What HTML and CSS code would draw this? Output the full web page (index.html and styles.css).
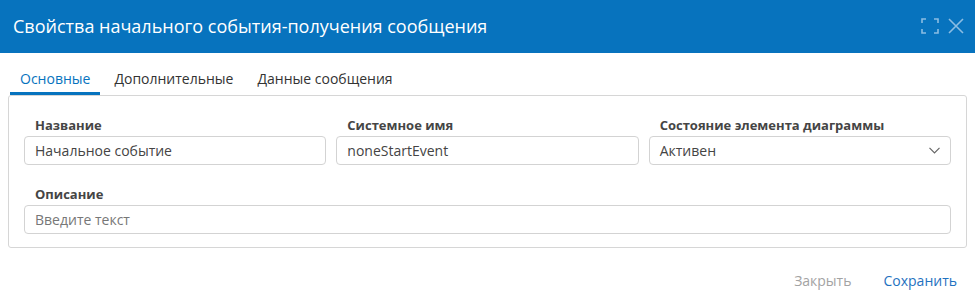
FILE: index.html
```html
<!DOCTYPE html>
<html lang="ru">
<head>
<meta charset="utf-8">
<title>Свойства начального события-получения сообщения</title>
<link rel="stylesheet" href="styles.css">
</head>
<body>
<div class="dialog">
  <div class="header">
    <div class="title">Свойства начального события-получения сообщения</div>
    <div class="header-icons">
      <svg class="icon" width="18" height="16" viewBox="0 0 18 16" fill="none" stroke="currentColor" stroke-width="1.6">
        <path d="M1 5V1h4M13 1h4v4M17 11v4h-4M5 15H1v-4"/>
      </svg>
      <svg class="icon" width="16" height="16" viewBox="0 0 16 16" fill="none" stroke="currentColor" stroke-width="1.6">
        <path d="M1 1l14 14M15 1L1 15"/>
      </svg>
    </div>
  </div>
  <div class="tabs">
    <div class="tab active">Основные</div>
    <div class="tab">Дополнительные</div>
    <div class="tab">Данные сообщения</div>
  </div>
  <div class="panel">
    <div class="row three">
      <div class="field">
        <div class="label">Название</div>
        <div class="input">Начальное событие</div>
      </div>
      <div class="field">
        <div class="label">Системное имя</div>
        <div class="input">noneStartEvent</div>
      </div>
      <div class="field">
        <div class="label">Состояние элемента диаграммы</div>
        <div class="input select">
          <span>Активен</span>
          <svg class="chevron" width="11" height="7" viewBox="0 0 11 7" fill="none" stroke="currentColor" stroke-width="1.2">
            <path d="M0.5 0.8L5.5 5.8L10.5 0.8"/>
          </svg>
        </div>
      </div>
    </div>
    <div class="row">
      <div class="field">
        <div class="label">Описание</div>
        <div class="input placeholder">Введите текст</div>
      </div>
    </div>
  </div>
  <div class="footer">
    <span class="btn btn-close">Закрыть</span>
    <span class="btn btn-save">Сохранить</span>
  </div>
</div>
</body>
</html>
```
FILE: styles.css
```css
html, body {
  margin: 0;
  padding: 0;
  background: #ffffff;
}

body {
  font-family: "Open Sans", "Noto Sans", sans-serif;
  color: #444444;
}

.dialog {
  width: 975px;
}

.header {
  height: 53px;
  background: #0773be;
  display: flex;
  align-items: center;
  justify-content: space-between;
  padding: 0 11px 0 13px;
  box-sizing: border-box;
}

.title {
  color: #ffffff;
  font-size: 18px;
  line-height: 24px;
  margin-top: -1px;
}

.header-icons {
  display: flex;
  align-items: center;
  gap: 9px;
  color: #8bbde3;
  margin-top: -2px;
}

.icon {
  display: block;
}

.tabs {
  display: flex;
  padding-left: 10px;
  padding-top: 16px;
  height: 42px;
  box-sizing: border-box;
}

.tab {
  font-size: 14px;
  line-height: 20px;
  padding: 0 10px 3px 10px;
  margin-right: 4px;
  color: #333333;
  border-bottom: 3px solid transparent;
  height: 20px;
}

.tab.active {
  color: #0773be;
  border-bottom-color: #0773be;
}

.panel {
  margin: 0 8px 0 8px;
  border: 1px solid #d6d6d6;
  border-radius: 3px;
  padding: 20px 15px 13px 15px;
  display: flex;
  flex-direction: column;
  gap: 20px;
}

.row {
  display: flex;
  gap: 10px;
}

.row.three .field {
  flex: 1 1 0;
}

.field {
  flex: 1 1 0;
  display: flex;
  flex-direction: column;
  gap: 2px;
  min-width: 0;
}

.label {
  font-size: 13px;
  font-weight: 700;
  line-height: 18px;
  color: #454545;
  padding-left: 11px;
}

.input {
  height: 29px;
  box-sizing: border-box;
  border: 1px solid #d3d3d3;
  border-radius: 4px;
  padding: 0 10px;
  font-size: 14px;
  line-height: 27px;
  color: #444444;
  display: flex;
  align-items: center;
  justify-content: space-between;
}

.input.placeholder {
  color: #777777;
}

.chevron {
  color: #666666;
  margin-right: 0;
}

.footer {
  display: flex;
  justify-content: flex-end;
  align-items: center;
  gap: 32px;
  padding: 23px 18px 0 0;
}

.btn {
  font-size: 14px;
  line-height: 20px;
}

.btn-close {
  color: #a3a3a3;
}

.btn-save {
  color: #1f72c0;
}
```
